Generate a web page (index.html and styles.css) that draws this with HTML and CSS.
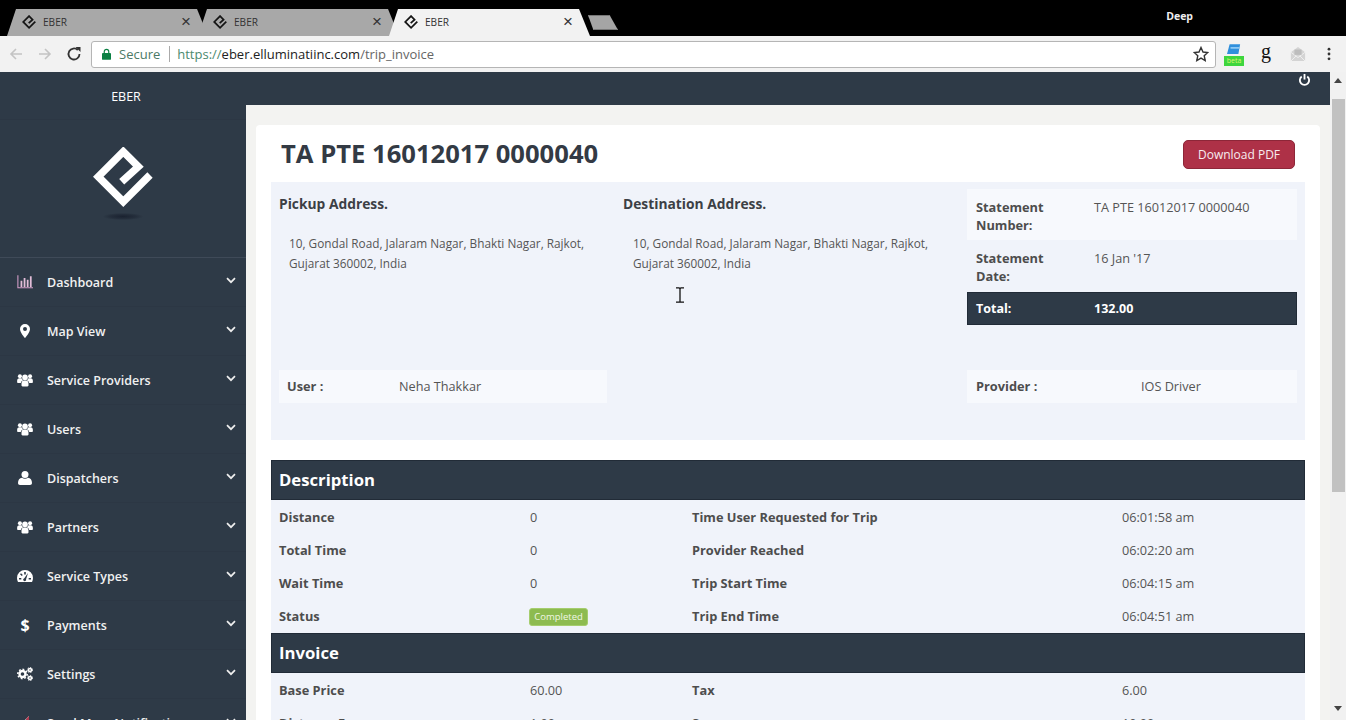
FILE: index.html
```html
<!DOCTYPE html>
<html lang="en">
<head>
<meta charset="utf-8">
<title>EBER</title>
<link rel="stylesheet" href="styles.css">
</head>
<body>
<svg class="defs" width="0" height="0" aria-hidden="true">
  <symbol id="logo" viewBox="0 0 60 60"><path d="M57 28 30.3 54.7 5.3 29.7 30.3 4.7 45.3 19.7 28.7 34.7" fill="none" stroke="currentColor" stroke-width="7.5"/></symbol>
  <symbol id="chev" viewBox="0 0 10 7"><path d="M1 1.2 5 5.2 9 1.2" fill="none" stroke="currentColor" stroke-width="1.7"/></symbol>
  <symbol id="users" viewBox="0 0 18 16"><circle cx="9" cy="5" r="3.2"/><circle cx="3.2" cy="3.6" r="2.3"/><circle cx="14.8" cy="3.6" r="2.3"/><path d="M0 9c0-2 1-3 2.5-3H5c.6 1.2 1.4 2 2 2.4C5.500 9 4.500 10 4.200 11.500H1C.4 11.500 0 11 0 10ZM18 9c0-2-1-3-2.500-3H13c-.6 1.200-1.400 2-2 2.400 1.500.6 2.500 1.600 2.800 3.100H17c.6 0 1-.5 1-1.500ZM5 12c0-2 1.200-3.300 2.800-3.300h2.400C11.800 8.700 13 10 13 12v2c0 .8-.5 1.300-1.200 1.300H6.200C5.500 15.300 5 14.800 5 14Z"/></symbol>
</svg>

<header class="tabstrip">
  <div class="tab">
    <svg class="favicon"><use href="#logo"/></svg><span class="tab-title">EBER</span><span class="tab-close">×</span>
  </div>
  <div class="tab">
    <svg class="favicon"><use href="#logo"/></svg><span class="tab-title">EBER</span><span class="tab-close">×</span>
  </div>
  <div class="tab tab-active">
    <svg class="favicon"><use href="#logo"/></svg><span class="tab-title">EBER</span><span class="tab-close">×</span>
  </div>
  <div class="newtab"></div>
  <div class="profile">Deep</div>
</header>

<div class="toolbar">
  <svg class="nav-icon nav-off" viewBox="0 0 16 16"><path d="M14 8H3M8 3 3 8l5 5" fill="none" stroke="currentColor" stroke-width="1.6"/></svg>
  <svg class="nav-icon nav-off" viewBox="0 0 16 16"><path d="M2 8h11M8 3l5 5-5 5" fill="none" stroke="currentColor" stroke-width="1.6"/></svg>
  <svg class="nav-icon" viewBox="0 0 16 16"><path d="M13.500 8A5.500 5.500 0 1 1 11.800 4" fill="none" stroke="currentColor" stroke-width="1.800"/><path d="M9.500 1 14.500 1 14.500 6Z" fill="currentColor"/></svg>
  <div class="omnibox">
    <svg class="lock" viewBox="0 0 10 13"><path d="M2.500 6V3.800a2.500 2.500 0 0 1 5 0V6" fill="none" stroke="#0b8043" stroke-width="1.300"/><rect y="5.500" width="10" height="7.500" rx="1" fill="#0b8043"/></svg>
    <span class="secure">Secure</span>
    <span class="omni-sep"></span>
    <span class="url"><span class="url-scheme">https://</span><span class="url-host">eber.elluminatiinc.com</span><span class="url-path">/trip_invoice</span></span>
    <svg class="star" viewBox="0 0 16 16"><path d="M8 1.500 10 6l4.800.5-3.600 3.200 1 4.800L8 12.100 3.800 14.500l1-4.800L1.200 6.500 6 6Z" fill="none" stroke="#333" stroke-width="1.400"/></svg>
  </div>
  <div class="extensions">
    <div class="ext-beta">
      <svg class="ext-folder" viewBox="0 0 16 12"><path d="M3 0h12l-2 11H0Z" fill="#2f8fdc"/><path d="M4 3h11l-1 2H4Z" fill="#8cc8f4"/></svg>
      <span class="beta-badge">beta</span>
    </div>
    <span class="ext-g">g</span>
    <svg class="ext-mail" viewBox="0 0 18 18"><path d="M9 1 1 7v10h16V7Z" fill="#d4d4d4"/><path d="M1 7l8 6 8-6M1 17l6-6M17 17l-6-6" fill="none" stroke="#f2f2f2"/><rect x="5" y="4" width="8" height="6" fill="#bdbdbd"/></svg>
    <svg class="ext-menu" viewBox="0 0 4 16"><circle cx="2" cy="2.500" r="1.600"/><circle cx="2" cy="8" r="1.600"/><circle cx="2" cy="13.500" r="1.600"/></svg>
  </div>
</div>

<div class="app">
  <aside class="sidebar">
    <div class="brand">EBER</div>
    <div class="logo-wrap">
      <svg class="logo"><use href="#logo"/></svg>
      <div class="logo-shadow"></div>
    </div>
    <nav class="menu">
      <a class="menu-item">
        <svg class="mi mi-chart" viewBox="0 0 18 15"><path d="M1 0v14h17" fill="none" stroke="#d59fca" stroke-width="1.200"/><path d="M4 6h2v7H4ZM7.500 3h2v10h-2ZM11 5h2v8h-2ZM14.500 1h2v12h-2Z" fill="#e2bdd8"/></svg>
        <span class="mt">Dashboard</span><svg class="chev"><use href="#chev"/></svg>
      </a>
      <a class="menu-item">
        <svg class="mi" viewBox="0 0 10 14"><path fill-rule="evenodd" d="M5 0a5 5 0 0 1 5 5c0 2.500-3 7-5 9-2-2-5-6.500-5-9a5 5 0 0 1 5-5Zm0 3a2 2 0 1 0 0 4 2 2 0 0 0 0-4Z"/></svg>
        <span class="mt">Map View</span><svg class="chev"><use href="#chev"/></svg>
      </a>
      <a class="menu-item">
        <svg class="mi"><use href="#users"/></svg>
        <span class="mt">Service Providers</span><svg class="chev"><use href="#chev"/></svg>
      </a>
      <a class="menu-item">
        <svg class="mi"><use href="#users"/></svg>
        <span class="mt">Users</span><svg class="chev"><use href="#chev"/></svg>
      </a>
      <a class="menu-item">
        <svg class="mi" viewBox="0 0 14 14"><circle cx="7" cy="3.500" r="3.500"/><path d="M0 12c0-3 1.500-5 4-5.200 1.800 1.200 4.200 1.200 6 0C12.500 7 14 9 14 12c0 1.300-.8 2-2 2H2c-1.200 0-2-.7-2-2Z"/></svg>
        <span class="mt">Dispatchers</span><svg class="chev"><use href="#chev"/></svg>
      </a>
      <a class="menu-item">
        <svg class="mi"><use href="#users"/></svg>
        <span class="mt">Partners</span><svg class="chev"><use href="#chev"/></svg>
      </a>
      <a class="menu-item">
        <svg class="mi" viewBox="0 0 16 12"><path fill-rule="evenodd" d="M8 0a8 8 0 0 1 8 8c0 1.500-.3 2.700-1 4H1C.3 10.700 0 9.500 0 8a8 8 0 0 1 8-8ZM7.200 2v2.500h1.600V2ZM3 4.200 4.800 6l1-1L4 3.200ZM2 8v1.500h2.300V8Zm9.700 0v1.500H14V8ZM11 3l-3.700 5.200a1.500 1.500 0 1 0 1.800 1Z"/></svg>
        <span class="mt">Service Types</span><svg class="chev"><use href="#chev"/></svg>
      </a>
      <a class="menu-item">
        <span class="mi mi-dollar">$</span>
        <span class="mt">Payments</span><svg class="chev"><use href="#chev"/></svg>
      </a>
      <a class="menu-item">
        <svg class="mi" viewBox="0 0 16 14"><g fill="none" stroke="#fff"><circle cx="5.500" cy="7" r="3" stroke-width="2.400"/><circle cx="5.500" cy="7" r="4.700" stroke-width="1.500" stroke-dasharray="1.800 1.800"/><circle cx="13" cy="3" r="1.500" stroke-width="1.600"/><circle cx="13" cy="3" r="2.600" stroke-width="1" stroke-dasharray="1.200 1.200"/><circle cx="13" cy="11" r="1.500" stroke-width="1.600"/><circle cx="13" cy="11" r="2.600" stroke-width="1" stroke-dasharray="1.200 1.200"/></g></svg>
        <span class="mt">Settings</span><svg class="chev"><use href="#chev"/></svg>
      </a>
      <a class="menu-item">
        <svg class="mi" viewBox="0 0 14 14"><path d="M11 0v14L6 10H1V5h5Z"/><path d="M11 0 8 3v8l3 3Z" fill="#b03a50"/></svg>
        <span class="mt">Send Mass Notification</span><svg class="chev"><use href="#chev"/></svg>
      </a>
    </nav>
  </aside>

  <main class="main">
    <div class="topbar">
      <svg class="power" viewBox="0 0 14 14"><path d="M4 3.200a5 5 0 1 0 6 0" fill="none" stroke="#fff" stroke-width="2"/><path d="M7 .5v6" stroke="#fff" stroke-width="2"/></svg>
    </div>
    <div class="content">
      <section class="card">
        <div class="card-head">
          <h1 class="title">TA PTE 16012017 0000040</h1>
          <a class="btn-pdf">Download PDF</a>
        </div>

        <div class="summary">
          <div class="addr-col">
            <h3 class="addr-title">Pickup Address.</h3>
            <p class="addr-text">10, Gondal Road, Jalaram Nagar, Bhakti Nagar, Rajkot, Gujarat 360002, India</p>
          </div>
          <div class="addr-col">
            <h3 class="addr-title">Destination Address.</h3>
            <p class="addr-text">10, Gondal Road, Jalaram Nagar, Bhakti Nagar, Rajkot, Gujarat 360002, India</p>
          </div>
          <div class="stmt">
            <div class="stmt-row stmt-light"><b class="stmt-label">Statement Number:</b><span>TA PTE 16012017 0000040</span></div>
            <div class="stmt-row"><b class="stmt-label">Statement Date:</b><span>16 Jan '17</span></div>
            <div class="stmt-row stmt-total"><b class="stmt-label">Total:</b><b>132.00</b></div>
          </div>
          <div class="person person-user"><b>User :</b><span>Neha Thakkar</span></div>
          <div></div>
          <div class="person person-provider"><b>Provider :</b><span>IOS Driver</span></div>
          <svg class="ibeam" viewBox="0 0 10 16"><path d="M1 .8h3l1 .8 1-.8h3M1 15.200h3l1-.8 1 .8h3M5 1.500v13" fill="none" stroke="#111" stroke-width="1.300"/></svg>
        </div>

        <h2 class="band">Description</h2>
        <div class="kv">
          <b>Distance</b><span>0</span><b>Time User Requested for Trip</b><span>06:01:58 am</span>
          <b>Total Time</b><span>0</span><b>Provider Reached</b><span>06:02:20 am</span>
          <b>Wait Time</b><span>0</span><b>Trip Start Time</b><span>06:04:15 am</span>
          <b>Status</b><span><em class="badge">Completed</em></span><b>Trip End Time</b><span>06:04:51 am</span>
        </div>
        <h2 class="band">Invoice</h2>
        <div class="kv">
          <b>Base Price</b><span>60.00</span><b>Tax</b><span>6.00</span>
          <b>Distance Fare</b><span>1.00</span><b>Surge</b><span>10.00</span>
        </div>
      </section>
    </div>
  </main>

  <div class="scrollbar">
    <span class="sb-up"></span>
    <span class="sb-thumb"></span>
    <span class="sb-down"></span>
  </div>
</div>
</body>
</html>
```
FILE: styles.css
```css
* { box-sizing: border-box; }
html, body { margin: 0; height: 720px; overflow: hidden; }
body { font-family: "Open Sans", "Liberation Sans", sans-serif; font-size: 12px; color: #555; background: #f3f3f1; }
.defs { display: block; height: 0; }
h1, h2, h3, p { margin: 0; }

/* tab strip */
.tabstrip { height: 36px; background: #000; display: flex; align-items: flex-end; padding-left: 7px; position: relative; }
.tab { width: 201px; height: 27px; margin-right: -10px; display: flex; align-items: center; padding: 0 0 2px 15px; background: #a8a8a8; clip-path: polygon(9px 0, calc(100% - 11px) 0, 100% 100%, 0 100%); color: #222; }
.tab-active { background: #f2f2f2; position: relative; }
.favicon { width: 14px; height: 14px; color: #151515; margin-right: 7px; flex: none; }
.tab-title { font-size: 11px; flex: 1; color: #333; transform: scaleX(.92); transform-origin: left; }
.tab-close { font-family: "Liberation Sans", sans-serif; font-size: 17px; line-height: 1; width: 27px; color: #333; }
.newtab { width: 30px; height: 15px; margin: 0 0 6px 8px; background: #a5a5a5; border: 1px solid #777; clip-path: polygon(0 0, 72% 0, 100% 100%, 18% 100%); }
.profile { margin-left: auto; margin-right: 153px; align-self: flex-start; margin-top: 9px; font-size: 10.500px; font-weight: 700; color: #eee; }

/* toolbar */
.toolbar { height: 36px; background: #f2f2f2; display: flex; align-items: center; padding-left: 8px; }
.nav-icon { width: 16px; height: 16px; margin-right: 13px; color: #333; flex: none; }
.nav-off { color: #c4c4c4; }
.toolbar .nav-icon:nth-child(3) { margin-right: 9px; }
.omnibox { width: 1125px; height: 27px; background: #fff; border: 1px solid #b5b5b5; border-radius: 3px; display: flex; align-items: center; padding-left: 10px; font-size: 13px; }
.lock { width: 9px; height: 12px; flex: none; }
.secure { margin-left: 8px; color: #4c7a66; font-size: 13px; }
.omni-sep { width: 1px; height: 16px; background: #aaa; margin: 0 7px 0 9px; }
.url { color: #666; flex: 1; font-size: 13px; white-space: nowrap; }
.url-scheme { color: #4b8a6e; }
.url-host { color: #222; }
.url-path { color: #666; }
.star { width: 16px; height: 16px; margin-right: 6px; flex: none; }
.extensions { display: flex; align-items: center; margin-left: 8px; position: relative; }
.ext-beta { width: 20px; height: 26px; display: flex; flex-direction: column; align-items: center; margin-right: 17px; }
.ext-folder { width: 14px; height: 11px; margin-top: 3px; }
.beta-badge { width: 20px; height: 10px; margin-top: 1px; background: #3ed63e; color: #d9f56e; font-size: 7px; line-height: 10px; text-align: center; }
.ext-g { font-family: "Liberation Serif", serif; font-size: 20px; line-height: 20px; color: #111; width: 12px; margin-right: 17px; margin-top: -6px; }
.ext-mail { width: 16px; height: 16px; margin-right: 21px; }
.ext-menu { width: 4px; height: 14px; fill: #333; }

/* app shell */
.app { height: 648px; display: flex; overflow: hidden; }
.sidebar { width: 246px; flex: none; background: #2e3a47; color: #fff; }
.brand { height: 48px; padding-top: 16px; text-align: center; font-size: 12.500px; line-height: 18px; padding-left: 6px; border-bottom: 1px solid #2c3744; }
.logo-wrap { height: 138px; display: flex; flex-direction: column; align-items: center; padding-top: 27px; border-bottom: 1px solid #3f4a58; }
.logo { width: 60px; height: 60px; color: #fff; }
.logo-shadow { width: 40px; height: 7px; margin-top: 6px; background: radial-gradient(ellipse at center, #1a2230 0%, rgba(26,34,48,.5) 45%, rgba(47,59,74,0) 72%); }
.menu-item { height: 49px; display: flex; align-items: center; border-bottom: 1px solid #2c3744; padding-left: 17px; padding-right: 10px; }
.mi { width: 16px; height: 14px; fill: #fff; flex: none; margin-right: 14px; color: #fff; }
.mi-dollar { font-weight: 700; font-size: 16px; line-height: 14px; text-align: center; }
.mt { flex: 1; font-size: 12.500px; font-weight: 600; color: #f1f1f1; }
.chev { width: 10px; height: 7px; color: #eee; margin-top: -4px; flex: none; }

.main { flex: 1; min-width: 0; display: flex; flex-direction: column; }
.topbar { height: 33px; background: #2e3a47; display: flex; justify-content: flex-end; padding: 1px 19px 0 0; flex: none; }
.power { width: 13px; height: 14px; }
.content { padding: 20px 10px 0; flex: 1; }

.card { background: #fff; border-radius: 4px 4px 0 0; padding: 0 15px 20px; height: 700px; }
.card-head { height: 57px; display: flex; align-items: center; justify-content: space-between; padding: 0 10px; }
.title { font-size: 25.600px; font-weight: 700; color: #333a44; line-height: 1; }
.btn-pdf { width: 112px; height: 29px; margin-top: 1px; background: #ae3147; border: 1px solid #8d2638; border-radius: 5px; color: #f7ecef; font-size: 12px; line-height: 27px; text-align: center; }

.summary { height: 258px; background: #f0f3fa; padding: 7px 8px 0; display: grid; grid-template-columns: 328px 328px 1fr; grid-template-rows: 181px 33px; column-gap: 16px; position: relative; margin-bottom: 20px; }
.addr-title { font-size: 13.800px; font-weight: 700; color: #3c3f45; line-height: 16px; margin-top: 7px; }
.addr-text { margin: 21px 0 0 10px; line-height: 20px; color: #555; width: 310px; font-size: 11.800px; }
.stmt-row { display: grid; grid-template-columns: 118px 1fr; padding: 9px 9px 0; line-height: 18px; height: 51px; color: #555; font-size: 12.700px; }
.stmt-label { color: #4d4d4d; font-size: 12.800px; font-weight: 700; padding-right: 30px; }
.stmt-light { background: #f7f9fd; height: 51px; }
.stmt-row:nth-child(2) { height: 52px; }
.stmt-total { height: 33px; background: #2e3a47; color: #fff; padding-top: 7px; padding-left: 8px; border: 1px solid #212b37; }
.stmt-total b { color: #fff; font-size: 12.500px; font-weight: 700; }
.person { background: #f7f9fd; display: flex; align-items: center; padding: 0 0 1px 8px; font-size: 12.700px; }
.person b { color: #4d4d4d; font-size: 12.800px; }
.person-user b { width: 112px; }
.person-provider { padding-left: 9px; }
.person-provider b { width: 165px; }
.ibeam { position: absolute; left: 404px; top: 105px; width: 10px; height: 16px; }

.band { height: 40px; background: #2e3a47; border: 1px solid #212b37; color: #fff; font-size: 16.700px; font-weight: 700; line-height: 37px; padding-left: 7px; }
.kv { background: #f0f3fa; display: grid; grid-template-columns: 251px 162px 430px 1fr; grid-auto-rows: 33.250px; padding-left: 8px; align-items: center; font-size: 12.700px; color: #555; }
.kv b { color: #4d4d4d; font-size: 12.800px; font-weight: 700; }
.badge { display: inline-block; width: 59px; height: 18px; margin-left: -1px; background: #8dbb50; border: 1px solid #a5cd6e; border-radius: 3px; color: #f1f7e5; font-style: normal; font-size: 9.500px; line-height: 16px; text-align: center; vertical-align: middle; }

/* scrollbar */
.scrollbar { width: 16px; flex: none; background: #f1f1f1; display: flex; flex-direction: column; align-items: center; }
.sb-up { width: 0; height: 0; margin-top: 6px; border: 4px solid transparent; border-top: 0; border-bottom: 5px solid #444; }
.sb-thumb { width: 13px; height: 393px; margin-top: 16px; background: #c1c1c1; }
.sb-down { width: 0; height: 0; margin-top: 214px; border: 4px solid transparent; border-bottom: 0; border-top: 5px solid #444; }
```
